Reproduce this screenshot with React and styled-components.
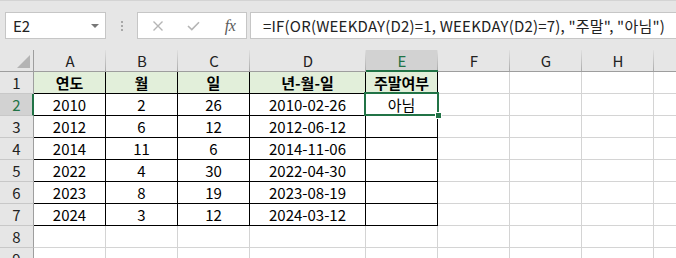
import React from 'react';
import styled, { createGlobalStyle, css } from 'styled-components';

const Global = createGlobalStyle`
  html, body { margin: 0; padding: 0; background: #fff; }
  body { font-family: "Noto Sans CJK KR", "Noto Sans", sans-serif; }
`;

const GREEN = '#217346';

const Frame = styled.div`
  width: 676px;
  height: 258px;
  overflow: hidden;
  background: #e6e6e6;
  display: flex;
  flex-direction: column;
`;

const Toolbar = styled.div`
  height: 50px;
  flex: none;
  box-sizing: border-box;
  border-top: 1px solid #d4d4d4;
  padding: 11px 0 0 5px;
  display: flex;
  align-items: flex-start;
`;

const Box = styled.div`
  height: 27px;
  box-sizing: border-box;
  background: #fff;
  border: 1px solid #c6c6c6;
  display: flex;
  align-items: center;
`;

const NameBox = styled(Box)`
  width: 101px;
  padding: 0 6px 0 7px;
  justify-content: space-between;
  font-size: 15px;
  color: #222;
`;

const Caret = styled.span`
  width: 0;
  height: 0;
  border-left: 4px solid transparent;
  border-right: 4px solid transparent;
  border-top: 4px solid #777;
`;

const Dots = styled.div`
  width: 31px;
  height: 27px;
  display: flex;
  flex-direction: column;
  align-items: center;
  justify-content: center;
  gap: 2px;
  span {
    width: 2px;
    height: 2px;
    background: #a8a8a8;
  }
`;

const ButtonBox = styled(Box)`
  width: 110px;
  padding-left: 13px;
`;

const IconSlot = styled.div`
  width: ${p => p.$w}px;
  display: flex;
  justify-content: center;
  align-items: center;
`;

const Fx = styled.span`
  font-family: "Liberation Serif", serif;
  font-style: italic;
  font-size: 16px;
  color: #5a5a5a;
  letter-spacing: -0.5px;
`;

const FormulaBox = styled(Box)`
  flex: 1;
  margin-left: 3px;
  margin-right: -2px;
  padding-left: 12px;
  font-size: 15px;
  letter-spacing: 0.2px;
  color: #222;
  white-space: nowrap;
`;

const Sheet = styled.div`
  display: grid;
  grid-template-columns: 34px 72px 72px 72px 116px 72px 72px 72px 72px 72px;
  grid-auto-rows: 22px;
  background: #fff;
`;

const Corner = styled.div`
  position: relative;
  background: #e6e6e6;
  box-sizing: border-box;
  border-right: 1px solid #9e9e9e;
  border-bottom: 1px solid #9e9e9e;
  &::after {
    content: '';
    position: absolute;
    right: 3px;
    bottom: 3px;
    width: 0;
    height: 0;
    border-left: 13px solid transparent;
    border-bottom: 13px solid #b4b4b4;
  }
`;

const ColHead = styled.div`
  position: relative;
  box-sizing: border-box;
  background: ${p => (p.$sel ? '#d2d2d2' : '#e6e6e6')};
  color: ${p => (p.$sel ? GREEN : '#222')};
  border-bottom: ${p => (p.$sel ? `2px solid ${GREEN}` : '1px solid #9e9e9e')};
  font-size: 15px;
  display: flex;
  align-items: center;
  justify-content: center;
  padding-top: ${p => (p.$sel ? 1 : 0)}px;
  &::after {
    content: '';
    position: absolute;
    right: 0;
    top: 0;
    bottom: 0;
    width: 1px;
    background: linear-gradient(#e0e0e0, #ababab);
  }
`;

const RowHead = styled.div`
  box-sizing: border-box;
  background: ${p => (p.$sel ? '#d2d2d2' : '#e6e6e6')};
  color: ${p => (p.$sel ? GREEN : '#222')};
  border-right: ${p => (p.$sel ? `2px solid ${GREEN}` : '1px solid #9e9e9e')};
  border-bottom: 1px solid #c8c8c8;
  font-size: 15px;
  display: flex;
  align-items: center;
  justify-content: center;
  padding-left: ${p => (p.$sel ? 1 : 0)}px;
`;

const Cell = styled.div`
  position: relative;
  box-sizing: border-box;
  background: ${p => (p.$head ? '#e2efda' : '#fff')};
  border-right: 1px solid ${p => (p.$table ? '#000' : '#d4d4d4')};
  border-bottom: 1px solid ${p => (p.$table ? '#000' : '#d4d4d4')};
  font-size: 15px;
  font-weight: ${p => (p.$head ? 700 : 400)};
  color: #000;
  display: flex;
  align-items: center;
  justify-content: center;
  white-space: nowrap;
  ${p => p.$active && css`z-index: 2;`}
`;

const Selection = styled.div`
  position: absolute;
  top: -2px;
  left: -2px;
  right: -2px;
  bottom: -1px;
  border: 2px solid ${GREEN};
  pointer-events: none;
`;

const FillHandle = styled.div`
  position: absolute;
  right: -4px;
  bottom: -4px;
  width: 5px;
  height: 5px;
  background: ${GREEN};
  box-shadow: 0 0 0 1px #fff;
`;

const cols = ['A', 'B', 'C', 'D', 'E', 'F', 'G', 'H', 'I'];

const data = [
  ['연도', '월', '일', '년-월-일', '주말여부'],
  ['2010', '2', '26', '2010-02-26', '아님'],
  ['2012', '6', '12', '2012-06-12', ''],
  ['2014', '11', '6', '2014-11-06', ''],
  ['2022', '4', '30', '2022-04-30', ''],
  ['2023', '8', '19', '2023-08-19', ''],
  ['2024', '3', '12', '2024-03-12', ''],
  [],
  [],
];

const XIcon = () => (
  <svg width="12" height="12" viewBox="0 0 12 12">
    <path d="M1.5 1.5 L10.5 10.5 M10.5 1.5 L1.5 10.5" stroke="#b5b5b5" strokeWidth="1.4" fill="none" />
  </svg>
);

const CheckIcon = () => (
  <svg width="13" height="10" viewBox="0 0 13 10">
    <path d="M1 5 L4.8 8.6 L12 1.2" stroke="#b5b5b5" strokeWidth="1.6" fill="none" />
  </svg>
);

export default function App() {
  return (
    <>
      <Global />
      <Frame>
        <Toolbar>
          <NameBox>
            <span>E2</span>
            <Caret />
          </NameBox>
          <Dots>
            <span />
            <span />
            <span />
          </Dots>
          <ButtonBox>
            <IconSlot $w={14}><XIcon /></IconSlot>
            <IconSlot $w={20} />
            <IconSlot $w={16}><CheckIcon /></IconSlot>
            <IconSlot $w={21} />
            <IconSlot $w={16}><Fx>fx</Fx></IconSlot>
          </ButtonBox>
          <FormulaBox>=IF(OR(WEEKDAY(D2)=1, WEEKDAY(D2)=7), "주말", "아님")</FormulaBox>
        </Toolbar>
        <Sheet>
          <Corner />
          {cols.map(c => (
            <ColHead key={c} $sel={c === 'E'}>{c}</ColHead>
          ))}
          {data.map((row, r) => (
            <React.Fragment key={r}>
              <RowHead $sel={r === 1}>{r + 1}</RowHead>
              {cols.map((c, ci) => {
                const inTable = ci < 5 && r < 7;
                const active = r === 1 && ci === 4;
                return (
                  <Cell key={c} $table={inTable} $head={inTable && r === 0} $active={active}>
                    {row[ci] || ''}
                    {active && (
                      <Selection>
                        <FillHandle />
                      </Selection>
                    )}
                  </Cell>
                );
              })}
            </React.Fragment>
          ))}
        </Sheet>
      </Frame>
    </>
  );
}
